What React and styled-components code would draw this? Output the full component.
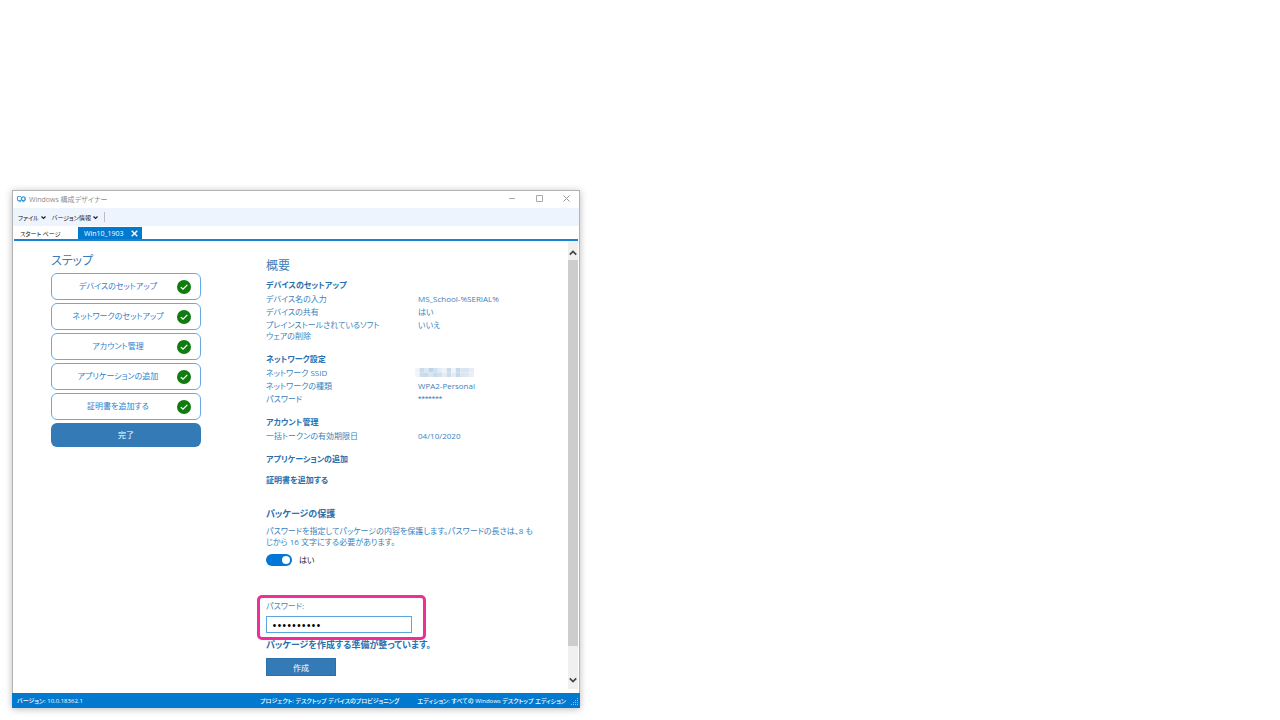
import React, { useState } from "react";
import styled, { createGlobalStyle } from "styled-components";

const Global = createGlobalStyle`
  *, *::before, *::after { box-sizing: border-box; }
  body { margin: 0; background: #fff; }
  body, button, input {
    font-family: "Open Sans", "Noto Sans CJK JP", sans-serif;
    font-size: 8px;
    font-feature-settings: "palt";
  }
  h1, h2, p, dl, dd, dt, ol { margin: 0; padding: 0; }
  button { border: 0; padding: 0; background: none; color: inherit; cursor: pointer; }
`;

const Page = styled.main`
  padding: 190px 12px 12px;
`;

const Window = styled.section`
  max-width: 568px;
  background: #fff;
  border: 1px solid #b4b4b4;
  border-bottom: 0;
  box-shadow: 0 1px 7px rgba(0, 0, 0, 0.28);
`;

const TitleBar = styled.header`
  display: flex;
  align-items: center;
  gap: 3px;
  height: 17px;
  padding: 0 3px 2px 4px;
  color: #8d8d8d;
  font-size: 7px;
`;

const Title = styled.span`
  flex: 1;
`;

const WindowButton = styled.button`
  display: grid;
  place-items: center;
  width: 20px;
  height: 15px;
  margin-left: 4px;
`;

const MenuBar = styled.nav`
  display: flex;
  align-items: center;
  gap: 6px;
  height: 18px;
  padding: 0 5px;
  background: #edf4fd;
  color: #111;
`;

const MenuButton = styled.button`
  display: flex;
  align-items: center;
  gap: 2px;
  font-size: 6px;
`;

const MenuDivider = styled.span`
  width: 1px;
  height: 10px;
  background: #b9bec6;
`;

const TabBar = styled.div`
  display: flex;
  align-items: flex-end;
  height: 15px;
  margin: 0 1px;
  border-bottom: 2px solid #1883d3;
`;

const Tab = styled.button`
  display: flex;
  align-items: center;
  justify-content: space-between;
  width: 64px;
  height: 12px;
  padding: 1px 4px 0 6px;
  font-size: ${(p) => (p.$active ? 7 : 6)}px;
  color: ${(p) => (p.$active ? "#fff" : "#111")};
  background: ${(p) => (p.$active ? "#0179cf" : "transparent")};
`;

const Workspace = styled.div`
  display: flex;
  padding-right: 1px;
`;

const Content = styled.div`
  flex: 1;
  min-width: 0;
  display: flex;
  gap: 65px;
  padding: 12px 29px 17px 38px;
`;

const Steps = styled.nav`
  flex: 0 0 150px;
`;

const Heading = styled.h1`
  color: #3a7cb9;
  font-size: 12px;
  font-weight: 400;
  line-height: 16px;
`;

const StepList = styled.ol`
  display: grid;
  gap: 3px;
  margin-top: 4px;
  list-style: none;
`;

const StepButton = styled.button`
  display: flex;
  align-items: center;
  width: 100%;
  height: 27px;
  padding: 0 9px 0 7px;
  border: 1px solid #67a8e6;
  border-radius: 6px;
  color: #2f80d0;
`;

const StepLabel = styled.span`
  flex: 1;
  padding-bottom: 2px;
  line-height: 12px;
`;

const FinishButton = styled.button`
  width: 100%;
  height: 24px;
  padding-bottom: 1px;
  border-radius: 6px;
  background: #337ab7;
  color: #fff;
`;

const Summary = styled.div`
  flex: 1;
  min-width: 0;
  padding-top: 5px;
`;

const Group = styled.section`
  margin-top: ${(p) => (p.$wide ? 21 : 8)}px;

  &:first-child {
    margin-top: 4px;
  }
`;

const GroupTitle = styled.h2`
  color: #2a6fae;
  font-size: ${(p) => (p.$large ? 9 : 8)}px;
  font-weight: 700;
  line-height: 13px;
`;

const Details = styled.dl`
  padding: 1px 0 2px;
`;

const Detail = styled.div`
  display: grid;
  grid-template-columns: 114px 1fr;
  column-gap: 38px;
  padding: 1px 0;
  color: #3d7fba;
  line-height: 11px;
`;

const Value = styled.dd`
  font-family: ${(p) => (p.$secret ? "Roboto, sans-serif" : "inherit")};
`;

const MaskedCell = styled.dd`
  display: flex;
  align-items: center;
  margin-left: -3px;
`;

const Note = styled.p`
  margin-top: 5px;
  color: #3d7fba;
  line-height: 11px;
`;

const ToggleLabel = styled.label`
  display: flex;
  align-items: center;
  gap: 7px;
  margin-top: 7px;
  color: #222;
  line-height: 12px;
`;

const Toggle = styled.input`
  appearance: none;
  display: flex;
  align-items: center;
  justify-content: flex-end;
  width: 26px;
  height: 12px;
  margin: 0;
  padding: 0 2px;
  border-radius: 6px;
  background: #0277d7;

  &:not(:checked) {
    justify-content: flex-start;
    background: #8a8a8a;
  }

  &::before {
    content: "";
    width: 8px;
    height: 8px;
    border-radius: 50%;
    background: #fff;
  }
`;

const Field = styled.div`
  position: relative;
  display: flex;
  flex-direction: column;
  gap: 4px;
  width: 146px;
  margin-top: 34px;

  &::after {
    content: "";
    position: absolute;
    inset: -5px -14px -7px -9px;
    border: 3px solid #ef2f95;
    border-radius: 5px;
    pointer-events: none;
  }
`;

const FieldLabel = styled.label`
  color: #4a88c0;
  line-height: 12px;
`;

const PasswordInput = styled.input`
  width: 100%;
  height: 17px;
  padding: 0 5px;
  border: 1px solid #5aa5e2;
  border-radius: 0;
  outline: 0;
  background: #fff;
  color: #000;
  font-size: 13px;
`;

const ReadyText = styled(GroupTitle).attrs({ as: "p" })`
  margin-top: 5px;
`;

const CreateButton = styled.button`
  display: block;
  width: 70px;
  height: 18px;
  margin-top: 7px;
  border: 1px solid #2a70ad;
  background: #337ab7;
  color: #fff;
`;

const ScrollBar = styled.div`
  flex: 0 0 10px;
  display: flex;
  flex-direction: column;
  margin-bottom: 4px;
  background: #f0f0f0;
`;

const ScrollButton = styled.button`
  display: grid;
  place-items: center;
  height: 19px;
  padding-top: ${(p) => (p.$up ? 5 : 0)}px;
`;

const ScrollTrack = styled.div`
  flex: 1;
  padding-bottom: 24px;
`;

const ScrollThumb = styled.div`
  height: 100%;
  background: #cdcdcd;
`;

const StatusBar = styled.footer`
  display: flex;
  align-items: center;
  gap: 18px;
  height: 15px;
  margin: 0 -1px;
  padding: 0 1px 0 5px;
  background: #0179cf;
  color: #fff;
  font-size: 6px;
  font-weight: 500;
`;

const Version = styled.span`
  flex: 1;
  font-size: 6px;
`;

const StatusEnd = styled.span`
  display: flex;
  align-items: center;
  gap: 4px;
`;

const Chevron = ({ up, size = 8, width = 2, color = "#444" }) => (
  <svg width={size} height={size} viewBox="0 0 8 8" fill="none" stroke={color} strokeWidth={width} aria-hidden="true">
    <path d={up ? "M.8 5.700 4 2.500 7.200 5.700" : "M.8 2.300 4 5.500 7.200 2.300"} />
  </svg>
);

const AppIcon = () => (
  <svg width="9" height="8" viewBox="0 0 9 8" fill="none" stroke="#3a97da" aria-hidden="true">
    <path d="M4 1.500H.5v4H4M1.500 6.700H4" strokeWidth=".9" />
    <circle cx="6.300" cy="3.800" r="1.900" strokeWidth="1.400" />
    <path d="M5 6.700h2.500" strokeWidth=".7" />
  </svg>
);

const CheckIcon = () => (
  <svg width="14" height="14" viewBox="0 0 14 14" fill="none" aria-hidden="true">
    <circle cx="7" cy="7" r="7" fill="#107c10" />
    <path d="M3.800 7.100 6 9.200 10.300 4.900" stroke="#fff" strokeWidth="1.300" />
  </svg>
);

const MASK = [
  ["#f1f4f8", "#c9dcec", "#dbe7f2", "#bdd5ea", "#cfe0ef", "#e3ecf5", "#eef3f8", "#c9dcec", "#f1f5f9", "#c5d9ea", "#dae6f1", "#d9e6f1", "#e4edf5"],
  ["#f3f5f9", "#cbddec", "#c7daeb", "#d9e6f1", "#c7daeb", "#cfdfee", "#e3ecf5", "#cbdced", "#e3ecf4", "#c5d9ea", "#d9e5f1", "#dde8f2", "#e9eff6"],
];

const MaskedValue = () => (
  <svg width="59" height="9" viewBox="0 0 13 2" preserveAspectRatio="none" role="img" aria-label="SSID">
    {MASK.map((row, y) => row.map((c, x) => <rect key={`${x}-${y}`} x={x} y={y} width="1" height="1" fill={c} />))}
  </svg>
);

const Grip = () => (
  <svg width="9" height="9" viewBox="0 0 9 9" fill="#8cc4ee" aria-hidden="true">
    <path d="M7 2h1v1H7zM5 4h1v1H5zM7 4h1v1H7zM3 6h1v1H3zM5 6h1v1H5zM7 6h1v1H7zM1 8h1v1H1zM3 8h1v1H3zM5 8h1v1H5zM7 8h1v1H7z" />
  </svg>
);

const steps = ["デバイスのセットアップ", "ネットワークのセットアップ", "アカウント管理", "アプリケーションの追加", "証明書を追加する"];

const groups = [
  {
    title: "デバイスのセットアップ",
    rows: [
      { label: "デバイス名の入力", value: "MS_School-%SERIAL%" },
      { label: "デバイスの共有", value: "はい" },
      { label: "プレインストールされているソフトウェアの削除", value: "いいえ" },
    ],
  },
  {
    title: "ネットワーク設定",
    rows: [
      { label: "ネットワーク SSID", masked: true },
      { label: "ネットワークの種類", value: "WPA2-Personal" },
      { label: "パスワード", value: "*******", secret: true },
    ],
  },
  { title: "アカウント管理", rows: [{ label: "一括トークンの有効期限日", value: "04/10/2020" }] },
  { title: "アプリケーションの追加", rows: [] },
  { title: "証明書を追加する", rows: [] },
];

export default function App() {
  const [isProtected, setProtected] = useState(true);
  const [password, setPassword] = useState("abcdefghij");

  return (
    <>
      <Global />
      <Page lang="ja">
        <Window>
          <TitleBar>
            <AppIcon />
            <Title>Windows 構成デザイナー</Title>
            <WindowButton aria-label="最小化">
              <svg width="7" height="7" viewBox="0 0 7 7" stroke="#aaa"><path d="M0 3.500h6" /></svg>
            </WindowButton>
            <WindowButton aria-label="最大化">
              <svg width="7" height="7" viewBox="0 0 7 7" fill="none" stroke="#aaa"><path d="M.5.500h6v6h-6z" /></svg>
            </WindowButton>
            <WindowButton aria-label="閉じる">
              <svg width="7" height="7" viewBox="0 0 7 7" stroke="#999"><path d="m.5.500 6 6m0-6-6 6" /></svg>
            </WindowButton>
          </TitleBar>
          <MenuBar>
            <MenuButton>ファイル<Chevron size={5} color="#222" /></MenuButton>
            <MenuButton>バージョン情報<Chevron size={5} color="#222" /></MenuButton>
            <MenuDivider />
          </MenuBar>
          <TabBar>
            <Tab>スタート ページ</Tab>
            <Tab $active>
              Win10_1903
              <svg width="7" height="7" viewBox="0 0 7 7" stroke="#fff" strokeWidth="1.400"><path d="m.7.700 5.600 5.600m0-5.600-5.600 5.600" /></svg>
            </Tab>
          </TabBar>
          <Workspace>
            <Content>
              <Steps>
                <Heading>ステップ</Heading>
                <StepList>
                  {steps.map((s) => (
                    <li key={s}>
                      <StepButton>
                        <StepLabel>{s}</StepLabel>
                        <CheckIcon />
                      </StepButton>
                    </li>
                  ))}
                  <li>
                    <FinishButton>完了</FinishButton>
                  </li>
                </StepList>
              </Steps>
              <Summary>
                <Heading>概要</Heading>
                <div>
                  {groups.map((g) => (
                    <Group key={g.title}>
                      <GroupTitle>{g.title}</GroupTitle>
                      {g.rows.length > 0 && (
                        <Details>
                          {g.rows.map((row) => (
                            <Detail key={row.label}>
                              <dt>{row.label}</dt>
                              {row.masked ? (
                                <MaskedCell><MaskedValue /></MaskedCell>
                              ) : (
                                <Value $secret={row.secret}>{row.value}</Value>
                              )}
                            </Detail>
                          ))}
                        </Details>
                      )}
                    </Group>
                  ))}
                </div>
                <Group $wide>
                  <GroupTitle $large>パッケージの保護</GroupTitle>
                  <Note>パスワードを指定してパッケージの内容を保護します。パスワードの長さは、8 もじから 16 文字にする必要があります。</Note>
                  <ToggleLabel>
                    <Toggle type="checkbox" role="switch" checked={isProtected} onChange={(e) => setProtected(e.target.checked)} />
                    はい
                  </ToggleLabel>
                  <Field>
                    <FieldLabel htmlFor="package-password">パスワード:</FieldLabel>
                    <PasswordInput id="package-password" type="password" value={password} onChange={(e) => setPassword(e.target.value)} />
                  </Field>
                  <ReadyText $large>パッケージを作成する準備が整っています。</ReadyText>
                  <CreateButton>作成</CreateButton>
                </Group>
              </Summary>
            </Content>
            <ScrollBar>
              <ScrollButton $up aria-label="上へ"><Chevron up width={1.7} /></ScrollButton>
              <ScrollTrack><ScrollThumb /></ScrollTrack>
              <ScrollButton aria-label="下へ"><Chevron width={1.7} /></ScrollButton>
            </ScrollBar>
          </Workspace>
          <StatusBar>
            <Version>バージョン: 10.0.18362.1</Version>
            <span>プロジェクト: デスクトップ デバイスのプロビジョニング</span>
            <StatusEnd>
              エディション: すべての Windows デスクトップ エディション
              <Grip />
            </StatusEnd>
          </StatusBar>
        </Window>
      </Page>
    </>
  );
}
